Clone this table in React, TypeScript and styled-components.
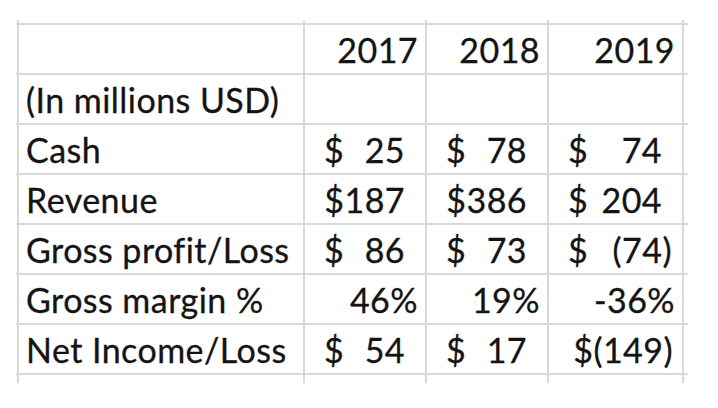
import React from "react";
import styled, { createGlobalStyle } from "styled-components";

const Global = createGlobalStyle`
  html, body { margin: 0; padding: 0; background: #ffffff; }
  body { font-family: Lato, "Open Sans", sans-serif; }
`;

const Page = styled.div`
  width: 718px;
  height: 408px;
  padding: 20px 0 0 16px;
  box-sizing: border-box;
  background: #ffffff;
`;

const Sheet = styled.div`
  display: grid;
  grid-template-columns: 1px 284px 120px 120px 133px 4px;
  grid-template-rows: 3px repeat(7, 48px) 8px;
  gap: 2px;
  width: 672px;
  height: 363px;
  background: #d9d9d9;
  font-family: Lato, "Open Sans", sans-serif;
  font-size: 34px;
  line-height: 1;
  letter-spacing: 0.45px;
  color: #141414;
  -webkit-text-stroke: 0.3px #141414;
`;

const Filler = styled.div`
  background: #ffffff;
`;

const Cell = styled.div<{ $align?: "left" | "right" | "split"; $padR?: number; $padL?: number }>`
  background: #ffffff;
  display: flex;
  align-items: flex-end;
  justify-content: ${(p) =>
    p.$align === "split" ? "space-between" : p.$align === "right" ? "flex-end" : "flex-start"};
  padding: 0 ${(p) => p.$padR ?? 7}px 6px ${(p) => p.$padL ?? 7}px;
  box-sizing: border-box;
  white-space: nowrap;
  overflow: visible;
`;

const Paren = styled.span`
  margin-right: -10px;
`;

type Val =
  | { kind: "text"; text: string; padR?: number }
  | { kind: "acct"; num: string; neg?: boolean }
  | { kind: "empty" };

type Row = { label: string; values: Val[] };

const rows: Row[] = [
  {
    label: "",
    values: [
      { kind: "text", text: "2017" },
      { kind: "text", text: "2018" },
      { kind: "text", text: "2019" },
    ],
  },
  { label: "(In millions USD)", values: [{ kind: "empty" }, { kind: "empty" }, { kind: "empty" }] },
  {
    label: "Cash",
    values: [
      { kind: "acct", num: "25" },
      { kind: "acct", num: "78" },
      { kind: "acct", num: "74" },
    ],
  },
  {
    label: "Revenue",
    values: [
      { kind: "text", text: "$187", padR: 20 },
      { kind: "text", text: "$386", padR: 20 },
      { kind: "acct", num: "204" },
    ],
  },
  {
    label: "Gross profit/Loss",
    values: [
      { kind: "acct", num: "86" },
      { kind: "acct", num: "73" },
      { kind: "acct", num: "(74", neg: true },
    ],
  },
  {
    label: "Gross margin %",
    values: [
      { kind: "text", text: "46%" },
      { kind: "text", text: "19%" },
      { kind: "text", text: "-36%" },
    ],
  },
  {
    label: "Net Income/Loss",
    values: [
      { kind: "acct", num: "54" },
      { kind: "acct", num: "17" },
      { kind: "text", text: "$(149)", padR: 9 },
    ],
  },
];

function ValueCell({ v }: { v: Val }) {
  if (v.kind === "empty") return <Cell />;
  if (v.kind === "text")
    return (
      <Cell $align="right" $padR={v.padR}>
        {v.text}
      </Cell>
    );
  return (
    <Cell $align="split" $padL={19} $padR={20}>
      <span>$</span>
      <span>
        {v.num}
        {v.neg && <Paren>)</Paren>}
      </span>
    </Cell>
  );
}

export default function App() {
  return (
    <>
      <Global />
      <Page>
        <Sheet>
          {Array.from({ length: 6 }).map((_, i) => (
            <Filler key={`t${i}`} />
          ))}
          {rows.map((r, ri) => (
            <React.Fragment key={ri}>
              <Filler />
              <Cell $align="left">{r.label}</Cell>
              {r.values.map((v, vi) => (
                <ValueCell key={vi} v={v} />
              ))}
              <Filler />
            </React.Fragment>
          ))}
          {Array.from({ length: 6 }).map((_, i) => (
            <Filler key={`b${i}`} />
          ))}
        </Sheet>
      </Page>
    </>
  );
}
